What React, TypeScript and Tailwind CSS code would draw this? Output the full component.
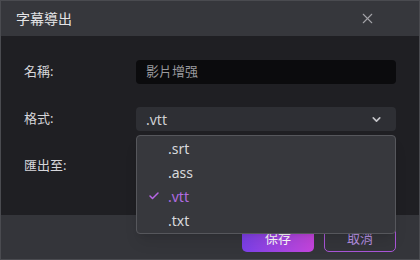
import React from "react";
import { ChevronDown, Check, X } from "lucide-react";

const font = { fontFamily: '"Noto Sans", "Noto Sans CJK TC", sans-serif' };

export default function App() {
  const items = [".srt", ".ass", ".vtt", ".txt"];
  return (
    <div
      className="w-[420px] h-[260px] flex flex-col border border-[#4a4b50] bg-[#1f1f23] overflow-hidden"
      style={font}
    >
      <div className="h-[35px] shrink-0 bg-[#36373c] flex items-center justify-between pl-[15px] pr-[45px] relative">
        <span className="text-[14px] text-[#e4e4e6] leading-none">字幕導出</span>
        <X size={17} strokeWidth={1.5} className="text-[#a3a3a8] absolute left-[358px] top-[9px]" />
      </div>
      <div className="flex-1 flex flex-col gap-[23px] pt-[24px] px-[23px] text-[13px]">
        <div className="flex items-center h-[24px]">
          <div className="w-[112px] text-[#d6d6da]">名稱:</div>
          <div className="flex-1 h-[24px] rounded-[4px] bg-[#0b0b0d] flex items-center px-[10px] text-[#9a9a9e]">
            影片增强
          </div>
        </div>
        <div className="flex items-center h-[24px]">
          <div className="w-[112px] text-[#d6d6da]">格式:</div>
          <div className="flex-1 relative">
            <div className="h-[24px] rounded-[4px] bg-[#2e2f34] flex items-center justify-between pl-[10px] pr-[13px] text-[14px] text-[#cfcfd3]">
              <span>.vtt</span>
              <ChevronDown size={13} strokeWidth={3} className="text-[#c4c4c8]" />
            </div>
            <div className="absolute left-0 right-0 top-[28px] h-[99px] z-10 rounded-[4px] border border-[#56575c] bg-[#37383d] pt-[0px] shadow-lg">
              {items.map((it) => (
                <div key={it} className="h-[24px] flex items-center relative text-[14px]">
                  {it === ".vtt" && (
                    <Check size={12} strokeWidth={3} className="absolute left-[11px] text-[#b866e6]" />
                  )}
                  <span className={"pl-[31px] " + (it === ".vtt" ? "text-[#b06be0]" : "text-[#d8d8dc]")}>{it}</span>
                </div>
              ))}
            </div>
          </div>
        </div>
        <div className="flex items-center h-[24px]">
          <div className="w-[112px] text-[#d6d6da]">匯出至:</div>
          <div className="flex-1 h-[24px] rounded-[4px] bg-[#0b0b0d]"></div>
        </div>
      </div>
      <div className="h-[44px] shrink-0 bg-[#34353a] flex items-start justify-end gap-[10px] pt-[11px] pr-[23px]">
        <button className="w-[72px] h-[26px] rounded-[5px] bg-gradient-to-r from-[#7b3fe8] to-[#c544dc] text-white text-[13px]">
          保存
        </button>
        <button className="w-[72px] h-[26px] rounded-[5px] border border-[#a955d8] text-[#b58fe0] text-[13px]">
          取消
        </button>
      </div>
    </div>
  );
}
